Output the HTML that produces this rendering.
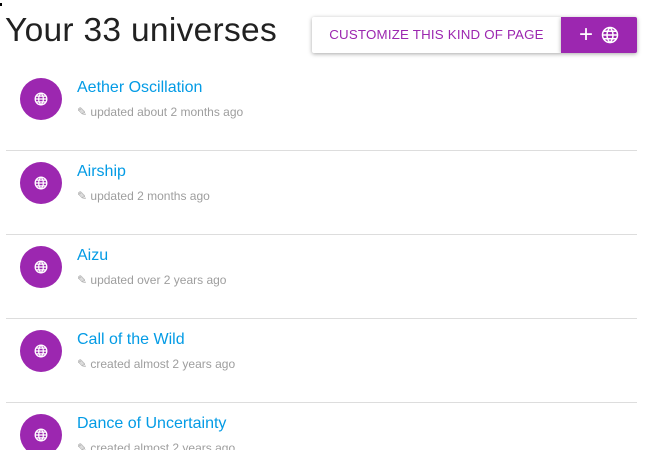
<!DOCTYPE html>
<html><head><style>
html,body{margin:0;width:646px;height:450px;overflow:hidden;background:#fff;font-family:"Liberation Sans",sans-serif;position:relative}
h1{position:absolute;left:5px;top:12px;margin:0;font-weight:400;font-size:33.5px;color:#212121;letter-spacing:0.3px}
.btn1{position:absolute;left:312px;top:17px;width:249px;height:36px;background:#fff;box-shadow:0 1px 4px rgba(0,0,0,.35);border-radius:2px 0 0 2px;color:#9c27b0;font-size:13.3px;line-height:36px;text-align:center;letter-spacing:.2px}
.btn2{position:absolute;left:561px;top:17px;width:76px;height:36px;background:#9c27b0;box-shadow:0 1px 4px rgba(0,0,0,.35);border-radius:0 2px 2px 0;color:#fff;display:flex;align-items:center;justify-content:center;gap:8px;font-size:22px}
.row{position:absolute;left:6px;width:631px;height:84px;border-bottom:1px solid #ddd}
.c{position:absolute;left:14px;top:12px;width:42px;height:42px;border-radius:50%;background:#9c27b0;display:flex;align-items:center;justify-content:center}
.t{position:absolute;left:71px;top:13px;font-size:16px;color:#039be5}
.m{position:absolute;left:71px;top:39px;font-size:12px;color:#9e9e9e}
</style></head><body>
<div style="position:absolute;left:0;top:3px;width:2px;height:3px;background:#000"></div>
<h1>Your 33 universes</h1>
<div class="btn1">CUSTOMIZE THIS KIND OF PAGE</div>
<div class="btn2"><span style="font-size:24px;line-height:1">+</span><svg width="18" height="18" viewBox="0 0 24 24" fill="none" stroke="#fff" stroke-width="2"><circle cx="12" cy="12" r="10"/><path d="M2 12h20M12 2c3 3 4 6.5 4 10s-1 7-4 10c-3-3-4-6.5-4-10s1-7 4-10M4 7h16M4 17h16"/></svg></div>
<div class="row" style="top:66px"><div class="c"><svg width="14" height="14" viewBox="0 0 24 24" fill="none" stroke="#fff" stroke-width="2.2"><circle cx="12" cy="12" r="10"/><path d="M2 12h20M12 2c3 3 4 6.5 4 10s-1 7-4 10c-3-3-4-6.5-4-10s1-7 4-10M4 7h16M4 17h16"/></svg></div><div class="t">Aether Oscillation</div><div class="m">✎ updated about 2 months ago</div></div>
<div class="row" style="top:150px"><div class="c"><svg width="14" height="14" viewBox="0 0 24 24" fill="none" stroke="#fff" stroke-width="2.2"><circle cx="12" cy="12" r="10"/><path d="M2 12h20M12 2c3 3 4 6.5 4 10s-1 7-4 10c-3-3-4-6.5-4-10s1-7 4-10M4 7h16M4 17h16"/></svg></div><div class="t">Airship</div><div class="m">✎ updated 2 months ago</div></div>
<div class="row" style="top:234px"><div class="c"><svg width="14" height="14" viewBox="0 0 24 24" fill="none" stroke="#fff" stroke-width="2.2"><circle cx="12" cy="12" r="10"/><path d="M2 12h20M12 2c3 3 4 6.5 4 10s-1 7-4 10c-3-3-4-6.5-4-10s1-7 4-10M4 7h16M4 17h16"/></svg></div><div class="t">Aizu</div><div class="m">✎ updated over 2 years ago</div></div>
<div class="row" style="top:318px"><div class="c"><svg width="14" height="14" viewBox="0 0 24 24" fill="none" stroke="#fff" stroke-width="2.2"><circle cx="12" cy="12" r="10"/><path d="M2 12h20M12 2c3 3 4 6.5 4 10s-1 7-4 10c-3-3-4-6.5-4-10s1-7 4-10M4 7h16M4 17h16"/></svg></div><div class="t">Call of the Wild</div><div class="m">✎ created almost 2 years ago</div></div>
<div class="row" style="top:402px"><div class="c"><svg width="14" height="14" viewBox="0 0 24 24" fill="none" stroke="#fff" stroke-width="2.2"><circle cx="12" cy="12" r="10"/><path d="M2 12h20M12 2c3 3 4 6.5 4 10s-1 7-4 10c-3-3-4-6.5-4-10s1-7 4-10M4 7h16M4 17h16"/></svg></div><div class="t">Dance of Uncertainty</div><div class="m">✎ created almost 2 years ago</div></div>
</body></html>
